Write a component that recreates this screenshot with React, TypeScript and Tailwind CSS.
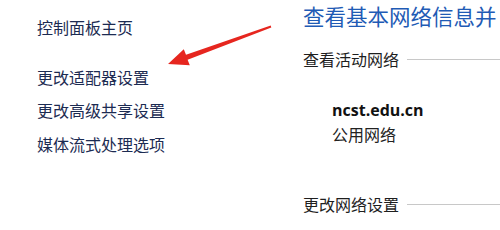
import React from "react";

const font = { fontFamily: '"Noto Sans CJK SC", "Noto Sans", sans-serif' };

export default function App() {
  return (
    <div className="relative w-[500px] h-[230px] bg-white overflow-hidden" style={font}>
      <div className="flex h-full">
        <div className="w-[303px] shrink-0 pl-[37px] pt-[16px] text-[16px] leading-[22px] text-[#1c2b52]">
          <div>控制面板主页</div>
          <div className="mt-[28px]">更改适配器设置</div>
          <div className="mt-[11px]">更改高级共享设置</div>
          <div className="mt-[12px]">媒体流式处理选项</div>
        </div>
        <div className="flex-1 min-w-0 pt-[2px] text-[#1e1e1e]">
          <div className="text-[21.5px] leading-[28px] text-[#1f5bb5] whitespace-nowrap">查看基本网络信息并</div>
          <div className="mt-[18px] flex items-center text-[16px] leading-[22px]">
            <span className="whitespace-nowrap">查看活动网络</span>
            <div className="ml-[8px] flex-1 h-px bg-[#c8c8c8]" />
          </div>
          <div className="pl-[29px] mt-[29px]">
            <div className="text-[16px] leading-[22px] font-bold text-[#111]" style={{ fontFamily: '"Open Sans", "Noto Sans", sans-serif' }}>ncst.edu.cn</div>
            <div className="mt-[2px] text-[16px] leading-[22px] text-[#222]">公用网络</div>
          </div>
          <div className="mt-[48px] flex items-center text-[16px] leading-[22px]">
            <span className="whitespace-nowrap">更改网络设置</span>
            <div className="ml-[8px] flex-1 h-px bg-[#c8c8c8]" />
          </div>
        </div>
      </div>
      <svg className="absolute left-0 top-0" width="500" height="230" viewBox="0 0 500 230">
        <polygon
          points="270.7,25.6 271.3,27.6 187.6,59.8 189.8,65.2 168,64 183.8,49.2 186,54.7"
          fill="#e6261f"
        />
      </svg>
    </div>
  );
}
